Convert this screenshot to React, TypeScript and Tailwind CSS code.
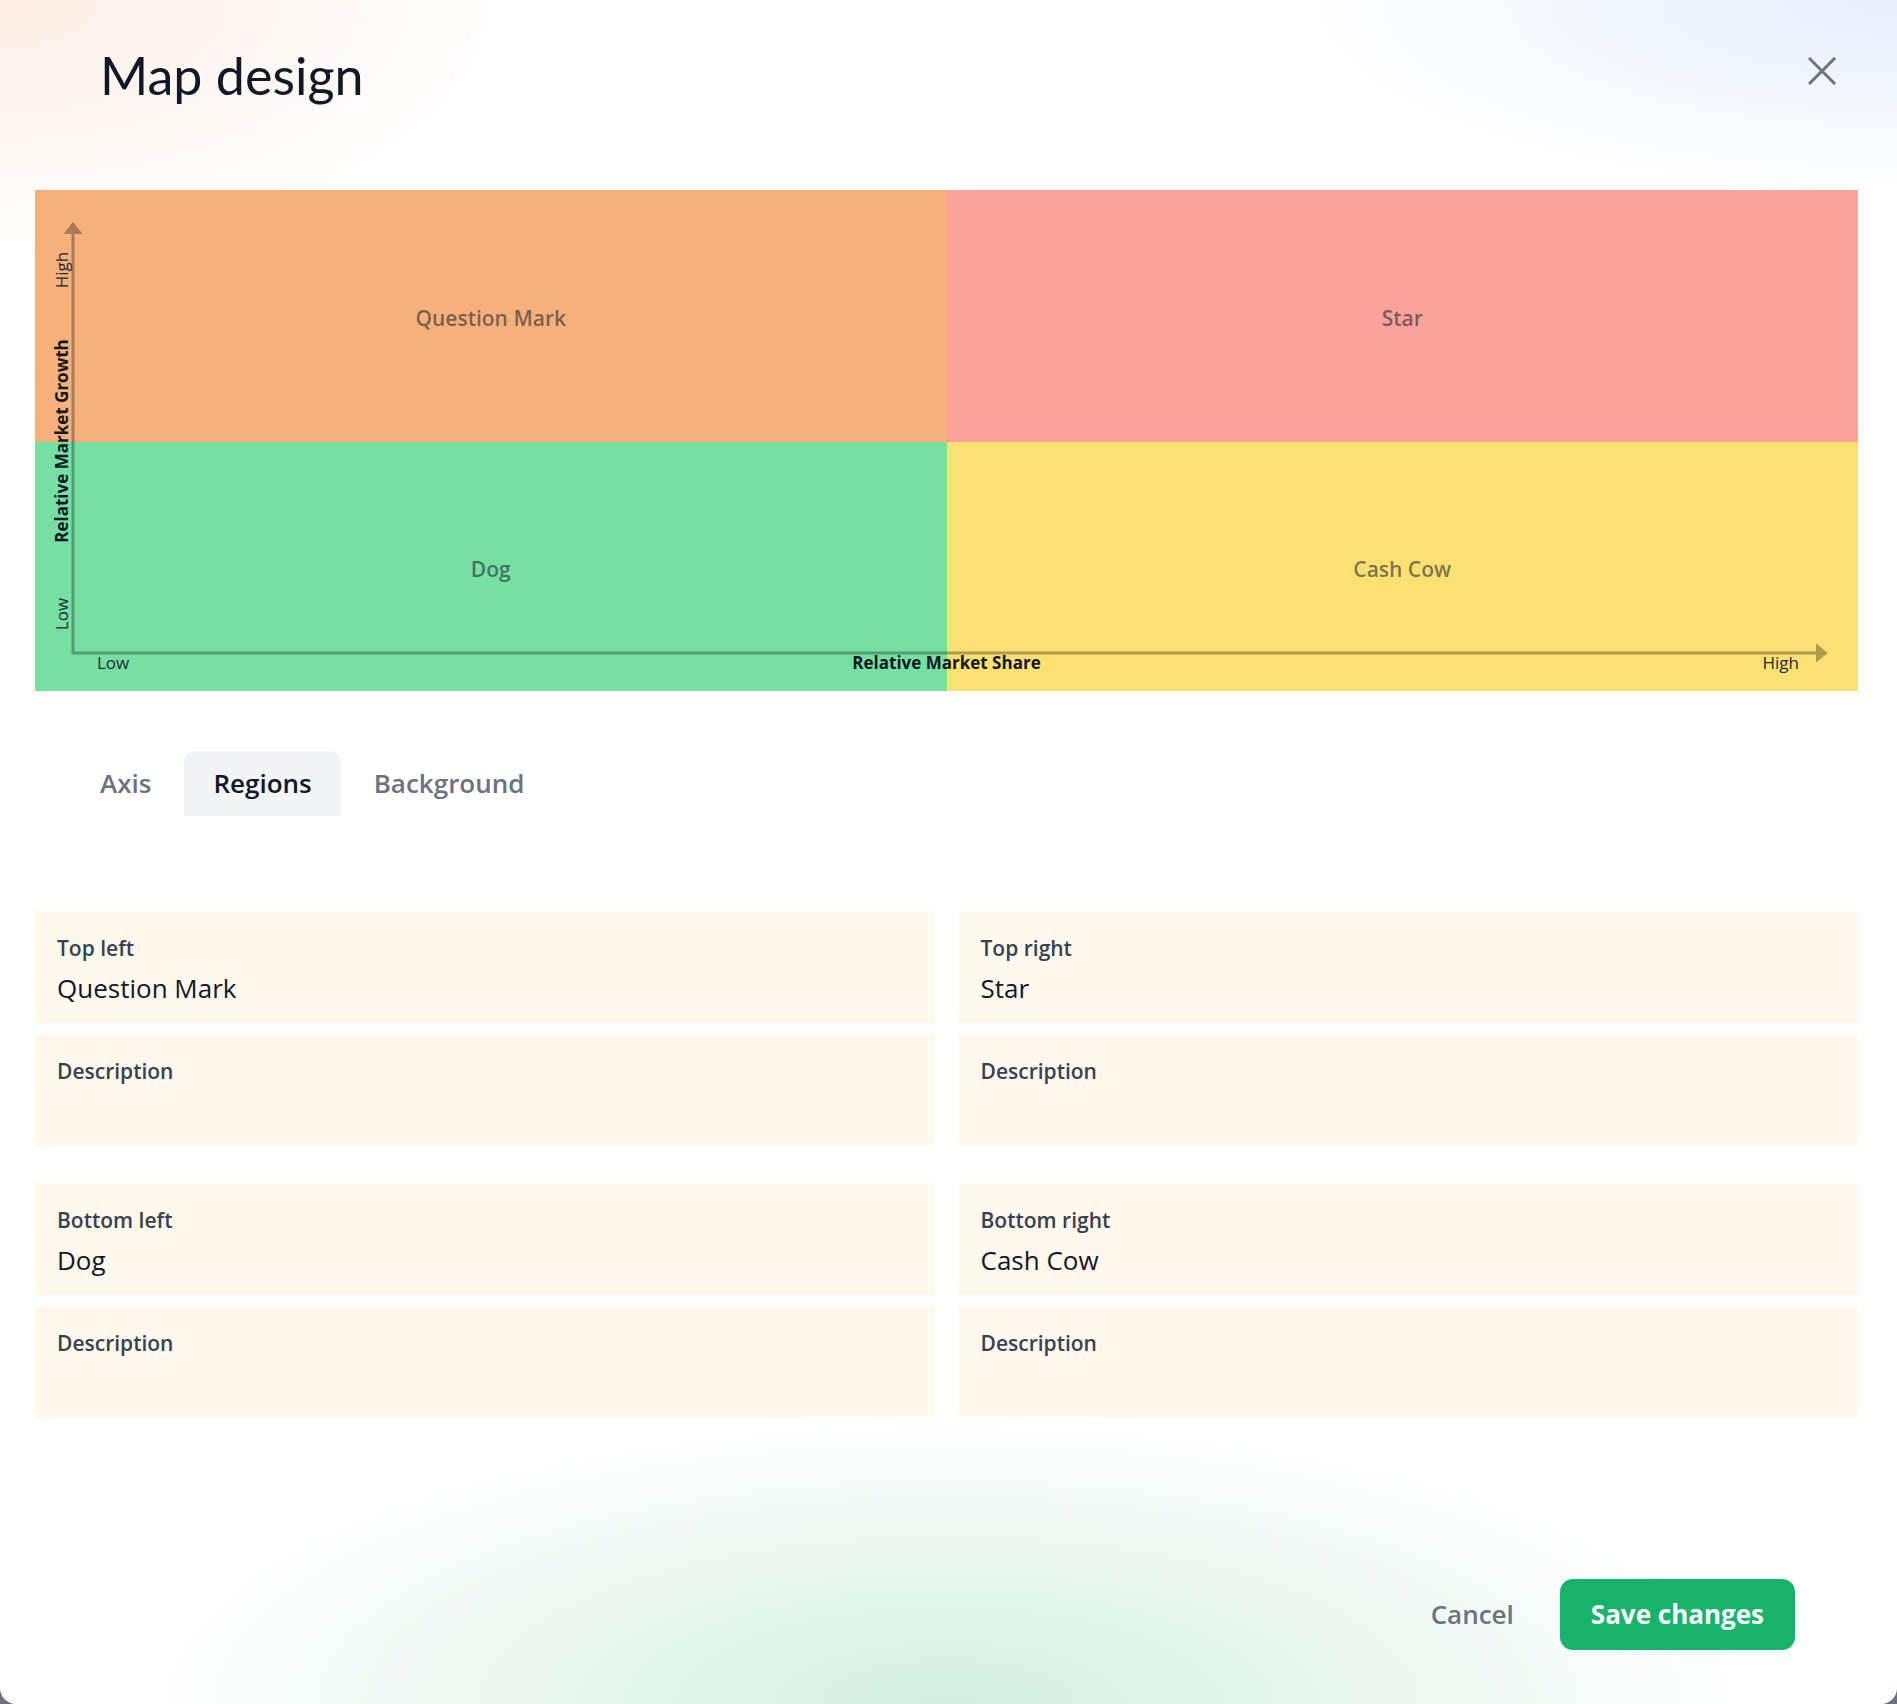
import React from "react";

const quadrants = [
  { label: "Question Mark", bg: "bg-[#f6b17a]" },
  { label: "Star", bg: "bg-[#fca29a]" },
  { label: "Dog", bg: "bg-[#75e0a2]" },
  { label: "Cash Cow", bg: "bg-[#fde072]" },
];

const regions = [
  { pos: "Top left", name: "Question Mark" },
  { pos: "Top right", name: "Star" },
  { pos: "Bottom left", name: "Dog" },
  { pos: "Bottom right", name: "Cash Cow" },
];

const tabs = ["Axis", "Regions", "Background"];

function Matrix() {
  return (
    <div className="relative grid h-[501px] grid-cols-2 grid-rows-[252px_249px]">
      {quadrants.map((q) => (
        <div key={q.label} className={`flex items-center justify-center pt-[6px] ${q.bg}`}>
          <span className="text-[21px] font-semibold text-[#1f2937]/60">{q.label}</span>
        </div>
      ))}

      {/* axes */}
      <svg
        className="pointer-events-none absolute inset-0 h-full w-full"
        viewBox="0 0 1823 501"
        preserveAspectRatio="none"
      >
        <path d="M38 44V463H1781" fill="none" stroke="rgba(0,0,0,0.3)" strokeWidth="3" />
        <path d="M38 32L47.5 44H28.5Z" fill="rgba(0,0,0,0.3)" />
        <path d="M1793 463L1781 453.5V472.5Z" fill="rgba(0,0,0,0.3)" />
      </svg>

      <span className="absolute left-[26px] top-[80px] -translate-x-1/2 -translate-y-1/2 -rotate-90 whitespace-nowrap text-[17px] leading-none text-[#1f2937]">
        High
      </span>
      <span className="absolute left-[26px] top-[251px] -translate-x-1/2 -translate-y-1/2 -rotate-90 whitespace-nowrap text-[17px] font-bold leading-none text-[#111827]">
        Relative Market Growth
      </span>
      <span className="absolute left-[26px] top-[424px] -translate-x-1/2 -translate-y-1/2 -rotate-90 whitespace-nowrap text-[17px] leading-none text-[#1f2937]">
        Low
      </span>

      <span className="absolute left-[62px] top-[464px] whitespace-nowrap text-[17px] leading-none text-[#1f2937]">
        Low
      </span>
      <span className="absolute left-1/2 top-[464px] -translate-x-1/2 whitespace-nowrap text-[17px] font-bold leading-none text-[#111827]">
        Relative Market Share
      </span>
      <span className="absolute right-[59px] top-[464px] whitespace-nowrap text-[17px] leading-none text-[#1f2937]">
        High
      </span>
    </div>
  );
}

function Field({ label, value }: { label: string; value?: string }) {
  return (
    <div className="h-[112px] bg-[#fef9ec] px-[22px] pt-[23px]">
      <div className="text-[21px] font-semibold leading-[28px] text-[#374151]">{label}</div>
      {value && <div className="mt-[9px] text-[26px] leading-[35px] text-[#111827]">{value}</div>}
    </div>
  );
}

export default function App() {
  return (
    <div className="h-[1704px] w-[1897px] bg-[#6b7280] font-['Open_Sans',sans-serif]">
      <div className="flex h-full flex-col overflow-hidden rounded-b-[16px] bg-white bg-[radial-gradient(520px_260px_at_0_0,#fdeee4,transparent),radial-gradient(620px_200px_at_100%_0,#e7effc,transparent),radial-gradient(820px_290px_at_50%_100%,#d3efe1,transparent)]">
        <div className="pl-[35px] pr-[39px]">
          <div className="flex h-[190px] items-start justify-between">
            <h1 className="pl-[65px] pt-[44px] font-['Lato',sans-serif] text-[52px] font-normal leading-[1.2] text-[#111827]">
              Map design
            </h1>
            <button className="mr-[22px] mt-[57px]" aria-label="Close">
              <svg width="28" height="28" viewBox="0 0 28 28" fill="none" stroke="#6b7280" strokeWidth="3" strokeLinecap="square">
                <path d="M2 2L26 26M26 2L2 26" />
              </svg>
            </button>
          </div>

          <Matrix />

          <div className="ml-[36px] mt-[60px] flex gap-1">
            {tabs.map((t) => (
              <button
                key={t}
                className={`h-[65px] rounded-t-[10px] px-[29px] text-[26px] font-semibold ${
                  t === "Regions" ? "bg-[#f3f4f6] text-[#111827]" : "text-[#6b7280]"
                }`}
              >
                {t}
              </button>
            ))}
          </div>

          <div className="mt-[95px] grid grid-cols-2 gap-x-[24px] gap-y-[37px]">
            {regions.map((r) => (
              <div key={r.pos} className="flex flex-col gap-[11px]">
                <Field label={r.pos} value={r.name} />
                <Field label="Description" />
              </div>
            ))}
          </div>
        </div>

        <div className="mt-auto flex items-center justify-end gap-[23px] pb-[54px] pr-[102px]">
          <button className="h-[71px] px-[23px] text-[26px] font-semibold text-[#6b7280]">Cancel</button>
          <button className="h-[71px] rounded-[13px] bg-[#18b36b] px-[31px] text-[26px] font-bold text-white">
            Save changes
          </button>
        </div>
      </div>
    </div>
  );
}
